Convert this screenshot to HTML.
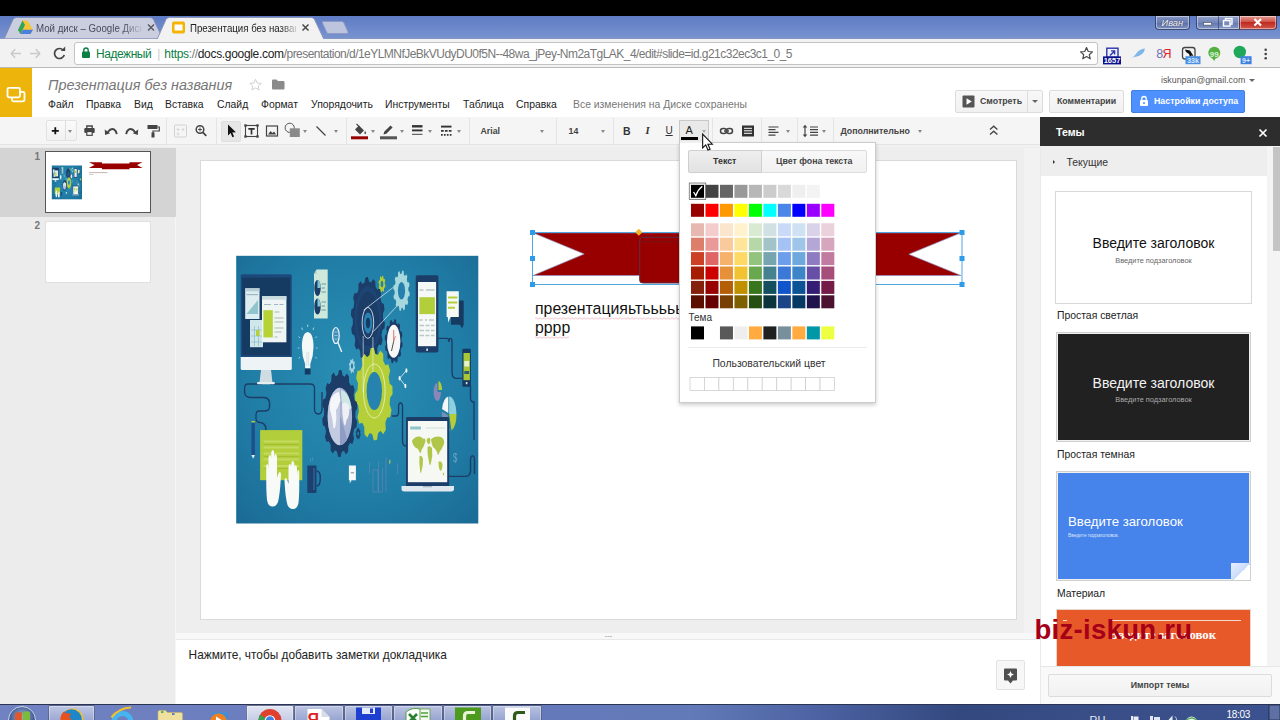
<!DOCTYPE html>
<html lang="ru">
<head>
<meta charset="utf-8">
<title>Презентация без названия</title>
<style>
*{box-sizing:border-box;margin:0;padding:0}
html,body{width:1280px;height:720px;overflow:hidden;background:#fff;font-family:"Liberation Sans",sans-serif;font-size:12px;color:#222}
.abs{position:absolute}
#blackbar{left:0;top:0;width:1280px;height:16px;background:#000}
#titlebar{left:0;top:16px;width:1280px;height:23px;background:linear-gradient(#5f7cc4,#6e8acb 60%,#7b94cf)}
#chrometb{left:0;top:39px;width:1280px;height:29px;background:#f2f2f2;border-bottom:1px solid #b9b9b9}
#omni{left:74px;top:42px;width:1024px;height:23px;background:#fff;border:1px solid #c4c4c4;border-radius:3px}
#dochead{left:0;top:68px;width:1280px;height:49px;background:#fff}
#logo{left:0;top:68px;width:32px;height:49px;background:#edb40b}
#toolbar{left:0;top:117px;width:1040px;height:31px;background:#f5f5f5;border-bottom:3px solid #f1f1f1;box-shadow:inset 0 -1px 0 #e4e4e4}
#film{left:0;top:147px;width:176px;height:557px;background:#ececec;border-right:1px solid #f6f6f6}
#main{left:176px;top:147px;width:864px;height:486px;background:#eee}
#slide{left:201px;top:161px;width:815px;height:458px;background:#fff;box-shadow:0 0 0 1px #dadada}
#notes{left:176px;top:632.500px;width:864px;height:71.500px;background:#fff;border-top:6.500px solid #f8f8f8;box-shadow:inset 0 1px 0 #e9e9e9}
#side{left:1040px;top:117px;width:240px;height:587px;background:#fff;border-left:1px solid #e9e9e9}
#taskbar{left:0;top:704px;width:1280px;height:16px;background:linear-gradient(90deg,#7182c2 0,#6579ba 42%,#627ab8 54%,#4c62a2 64%,#33487e 75%,#394e87 85%,#3c5290 100%);border-top:1px solid #2b3553;overflow:hidden}
.tbb{position:absolute;top:705px;height:16px;border:1px solid rgba(30,40,80,.55);border-bottom:none;border-radius:2px 2px 0 0;background:linear-gradient(rgba(255,255,255,.55),rgba(255,255,255,.3));box-shadow:inset 0 0 0 1px rgba(255,255,255,.35)}

#titlebar svg{position:absolute;left:0;top:0}
.tabtxt{position:absolute;top:21px;font-size:11px;line-height:14px;white-space:nowrap;overflow:hidden;transform-origin:0 50%;transform:scaleX(.88)}
.wbtn{position:absolute;top:16px;height:14px;border:1px solid rgba(40,50,90,.75);border-top:none;border-radius:0 0 4px 4px;box-shadow:inset 0 0 0 1px rgba(255,255,255,.45)}
#omnitxt{left:96px;top:47px;font-size:12px;white-space:nowrap;letter-spacing:-0.1px;line-height:15px}

.menu{position:absolute;top:99px;font-size:10.4px;line-height:12px;color:#222;white-space:nowrap}
.btn{position:absolute;top:90px;height:23px;border:1px solid #dcdcdc;border-radius:2px;background:linear-gradient(#f8f8f8,#f1f1f1);font-size:8.8px;font-weight:bold;color:#444;line-height:21px;white-space:nowrap}
.tsep{position:absolute;top:118px;width:1px;height:27px;background:#e4e4e4}
.car{position:absolute;top:130px;width:0;height:0;border-left:2.5px solid transparent;border-right:2.5px solid transparent;border-top:3px solid #888}
.tbt{position:absolute;top:125px;font-size:8.8px;font-weight:bold;color:#444;line-height:12px;white-space:nowrap}

.num{position:absolute;left:30px;width:10px;text-align:right;font-size:10px;font-weight:bold;color:#777;line-height:12px}
.thlabel{position:absolute;left:1057px;font-size:10.4px;line-height:12px;color:#222;white-space:nowrap}
.theme{position:absolute;left:1056px;width:195px;border:1px solid #d8d8d8;overflow:hidden}
.theme div{position:absolute;white-space:nowrap}
</style>
</head>
<body>
<div class="abs" id="blackbar"></div>
<div class="abs" id="titlebar"></div>
<div class="abs" id="chrometb"></div>

<svg class="abs" style="left:0;top:16px" width="1280" height="23" viewBox="0 16 1280 23">
  <path d="M4 39 L13 19.5 Q14 17.5 16.5 17.5 L150 17.5 Q152.5 17.5 153.5 19.5 L163 39 Z" fill="#cbcedf" stroke="#7f8db6" stroke-width="1"/>
  <path d="M157 39.5 L166 19.5 Q167 17.5 169.5 17.5 L311 17.5 Q313.5 17.5 314.5 19.5 L324 39.5 Z" fill="#f2f2f2" stroke="#8c97b8" stroke-width="1"/>
  <rect x="0" y="38.5" width="158" height="1" fill="#8f9bbd"/>
  <rect x="323" y="38.5" width="957" height="1" fill="#8f9bbd"/>
  <path d="M322.5 21.5 L342 21.5 Q343.5 21.5 344 23 L348 32 Q348.5 33.5 347 33.5 L328.5 33.5 Q327 33.5 326.5 32 L322.5 23 Z" fill="#bcc4de" stroke="#8d9ac4" stroke-width="1"/>
  <!-- drive favicon -->
  <path d="M22.5 20.5 L27.5 20.5 L33 30 L30.5 34 L20.5 34 L18 30 Z" fill="#f5c432"/>
  <path d="M22.5 20.5 L25 25 L20.5 34 L18 30 Z" fill="#2fa463"/>
  <path d="M20.5 34 L23 29.8 L33 29.8 L30.5 34 Z" fill="#4a7fe0"/>
  <!-- slides favicon -->
  <rect x="172" y="21.5" width="13" height="12" rx="2" fill="#f4b400"/>
  <rect x="174.5" y="24.5" width="8" height="6" fill="#fff"/>
  <!-- close x -->
  <path d="M148 24.5 l6 6 m0 -6 l-6 6" stroke="#5a5a66" stroke-width="1.5" fill="none"/>
  <path d="M302.5 24.5 l6 6 m0 -6 l-6 6" stroke="#4a4a4a" stroke-width="1.5" fill="none"/>
</svg>
<div class="tabtxt" style="left:35.5px;width:120px;color:#454a5c">Мой диск – Google Диск</div>
<div class="abs" style="left:122px;top:20px;width:22px;height:16px;background:linear-gradient(90deg,rgba(203,206,223,0),#cbcedf)"></div>
<div class="tabtxt" style="left:189.5px;width:121px;color:#222">Презентация без назван</div>
<div class="abs" style="left:280px;top:20px;width:20px;height:16px;background:linear-gradient(90deg,rgba(242,242,242,0),#f2f2f2)"></div>
<!-- window buttons -->
<div class="wbtn" style="left:1155px;width:35px;background:linear-gradient(#8395c4,#6a7eb3 50%,#5a6fa8 51%,#7f93c4)"></div>
<div class="abs" style="left:1161.500px;top:17.500px;font-size:9.300px;line-height:11px;color:#f2f4fa;font-style:italic;text-shadow:0 0 2px #334">Иван</div>
<div class="wbtn" style="left:1196px;width:44px;border-radius:0 0 0 4px;background:linear-gradient(#95a4cc,#7487ba 50%,#6277ae 51%,#8497c6)"></div>
<div class="wbtn" style="left:1239px;width:38px;border-radius:0 0 4px 0;background:linear-gradient(#e29a92,#d0544a 45%,#bf2a22 50%,#d1584a)"></div>
<div class="abs" style="left:1217.5px;top:16px;width:1px;height:14px;background:rgba(40,50,90,.55)"></div>
<svg class="abs" style="left:1196px;top:16px" width="82" height="14" viewBox="0 0 82 14">
  <rect x="7.5" y="6.5" width="8" height="2.6" fill="#fff" stroke="#445" stroke-width=".6"/>
  <rect x="29.5" y="2.6" width="6.5" height="5.5" fill="none" stroke="#fff" stroke-width="1.4"/>
  <rect x="27.5" y="4.6" width="6.5" height="5.5" fill="#7a8cbd" stroke="#fff" stroke-width="1.4"/>
  <path d="M58.5 3 l6.5 6.5 m0 -6.5 l-6.5 6.5" stroke="#fff" stroke-width="2.2" fill="none"/>
</svg>
<!-- chrome toolbar -->
<svg class="abs" style="left:0;top:39px" width="74" height="29" viewBox="0 39 74 29">
  <path d="M11 53.5 h10 M11 53.5 l4.2 -4.2 M11 53.5 l4.2 4.2" stroke="#c9c9c9" stroke-width="1.5" fill="none"/>
  <path d="M40 53.5 h-10 M40 53.5 l-4.2 -4.2 M40 53.5 l-4.2 4.2" stroke="#c9c9c9" stroke-width="1.5" fill="none"/>
  <path d="M63.3 50.2 A5 5 0 1 0 64.3 55" stroke="#444" stroke-width="1.7" fill="none"/>
  <path d="M60.8 51 L65.2 51 L65.2 46.6 Z" fill="#444"/>
</svg>
<div class="abs" id="omni"></div>
<svg class="abs" style="left:80px;top:46px" width="12" height="14" viewBox="0 0 12 14">
  <rect x="2" y="5.5" width="8" height="6.5" rx="1" fill="#0b8043"/>
  <path d="M3.8 6 V4.2 a2.2 2.2 0 0 1 4.4 0 V6" fill="none" stroke="#0b8043" stroke-width="1.4"/>
</svg>
<div class="abs" id="omnitxt"><span style="color:#0b8043;letter-spacing:-.45px">Надежный</span><span style="color:#ccc;margin:0 4px 0 6px">|</span><span style="color:#0b8043;letter-spacing:-.32px">https</span><span style="color:#777;letter-spacing:-.32px">://</span><span style="color:#222;letter-spacing:-.32px">docs.google.com</span><span style="color:#777;letter-spacing:-.53px">/presentation/d/1eYLMNfJeBkVUdyDU0f5N--48wa_jPey-Nm2aTgLAK_4/edit#slide=id.g21c32ec3c1_0_5</span></div>

<svg class="abs" style="left:1076px;top:39px" width="204" height="29" viewBox="1076 39 204 29" font-family="Liberation Sans, sans-serif">
  <path d="M1086.5 47.6 l1.75 3.9 4.2 .4 -3.2 2.8 1 4.1 -3.75 -2.2 -3.75 2.2 1 -4.1 -3.2 -2.8 4.2 -.4z" fill="none" stroke="#4a4a4a" stroke-width="1.2" stroke-linejoin="round"/>
  <rect x="1106.8" y="48.2" width="11.2" height="9" fill="#eef0fb" stroke="#2a35a8" stroke-width="1.4"/>
  <path d="M1110 55.5 l4.6 -4.6 m-3.6 0 h3.6 v3.6" stroke="#2a35a8" stroke-width="1.4" fill="none"/>
  <rect x="1103" y="56.4" width="18" height="8" fill="#0a0f8c"/>
  <text x="1112" y="63.2" font-size="7.5" font-weight="bold" fill="#fff" text-anchor="middle">1657</text>
  <path d="M1131 58 q3 -1 5 -4 q3 -5 9 -5.5 q-.5 3.5 -3 5.5 q-3 2.800 -7.500 3 q-2 .5 -3.500 1z" fill="#7db6e8"/>
  <text x="1156.300" y="58.300" font-size="12.500" fill="#6c70b8">8</text>
  <text x="1162.600" y="58.300" font-size="12.500" fill="#e0222a">Я</text>
  <rect x="1182.500" y="47.500" width="12.500" height="11.500" rx="2.500" fill="#f4f4f4" stroke="#444" stroke-width="1.3"/>
  <path d="M1185 49.500 l5 1 3.500 5.500 -2 -.5 -1.500 1.500 -1 -3 -3 -2z" fill="#111"/>
  <rect x="1185.500" y="56.200" width="15" height="8" fill="#4a8fe2"/>
  <text x="1193" y="63" font-size="7" font-weight="bold" fill="#d8e8ff" text-anchor="middle">33k</text>
  <circle cx="1214.300" cy="52.800" r="6" fill="#55b043"/>
  <path d="M1212 58 l2.300 3 1.500 -3.500z" fill="#55b043"/>
  <text x="1214.300" y="56.500" font-size="8" font-weight="bold" fill="#d9f2d0" text-anchor="middle">99</text>
  <circle cx="1239.800" cy="52" r="6.200" fill="#1fa85a"/>
  <rect x="1240.600" y="56.200" width="11" height="8" fill="#3f80e0"/>
  <text x="1246" y="63" font-size="7" font-weight="bold" fill="#d8e8ff" text-anchor="middle">9+</text>
  <circle cx="1265.700" cy="49.800" r="1.300" fill="#444"/><circle cx="1265.700" cy="54" r="1.300" fill="#444"/><circle cx="1265.700" cy="58.200" r="1.300" fill="#444"/>
</svg>
<div class="abs" id="dochead"></div>
<div class="abs" id="logo"></div>

<svg class="abs" style="left:0;top:68px" width="32" height="49" viewBox="0 0 32 49">
  <rect x="12" y="23.800" width="12.500" height="9.500" rx="1.500" fill="none" stroke="#fff" stroke-width="1.800"/>
  <rect x="7.500" y="19.800" width="12.500" height="9.500" rx="1.500" fill="#edb40b" stroke="#fff" stroke-width="1.800"/>
</svg>
<div class="abs" style="left:48px;top:76px;font-size:14.4px;line-height:18px;font-style:italic;color:#777;white-space:nowrap">Презентация без названия</div>
<svg class="abs" style="left:246px;top:76px" width="46" height="18" viewBox="246 76 46 18">
  <path d="M255.500 79.300 l1.700 3.700 4 .4 -3 2.700 .9 3.900 -3.600 -2.100 -3.600 2.100 .9 -3.900 -3 -2.700 4 -.4z" fill="none" stroke="#d0d0d0" stroke-width="1" stroke-linejoin="round"/>
  <path d="M272 80.500 q0 -1 1 -1 h3.500 l1.500 1.500 h5.500 q1 0 1 1 v6.500 q0 1 -1 1 h-10.500 q-1 0 -1 -1z" fill="#8a8a8a"/>
</svg>
<div class="menu" style="left:48px">Файл</div>
<div class="menu" style="left:86px">Правка</div>
<div class="menu" style="left:134px">Вид</div>
<div class="menu" style="left:165px">Вставка</div>
<div class="menu" style="left:217px">Слайд</div>
<div class="menu" style="left:261px">Формат</div>
<div class="menu" style="left:311px">Упорядочить</div>
<div class="menu" style="left:385px">Инструменты</div>
<div class="menu" style="left:463px">Таблица</div>
<div class="menu" style="left:516px">Справка</div>
<div class="menu" style="left:573px;color:#777">Все изменения на Диске сохранены</div>
<div class="abs" style="left:1161px;top:75px;font-size:8.8px;line-height:11px;color:#555;white-space:nowrap">iskunpan@gmail.com</div>
<div class="abs" style="left:1249px;top:79px;width:0;height:0;border-left:3px solid transparent;border-right:3px solid transparent;border-top:3.500px solid #666"></div>
<div class="btn" style="left:955px;width:73px;border-radius:2px 0 0 2px;padding-left:24px">Смотреть</div>
<div class="btn" style="left:1027px;width:16px;border-radius:0 2px 2px 0"></div>
<div class="abs" style="left:1032px;top:100px;width:0;height:0;border-left:3px solid transparent;border-right:3px solid transparent;border-top:3.500px solid #666"></div>
<svg class="abs" style="left:962px;top:95px" width="13" height="13" viewBox="0 0 13 13"><rect x=".5" y=".5" width="12" height="12" rx="1" fill="#555"/><path d="M4.500 3.200 L9.800 6.500 L4.500 9.800Z" fill="#fff"/></svg>
<div class="btn" style="left:1049px;width:75px;text-align:center">Комментарии</div>
<div class="btn" style="left:1131px;width:114px;background:#4d90fe;border-color:#3f7fe6;color:#fff;padding-left:22px">Настройки доступа</div>
<svg class="abs" style="left:1139px;top:95px" width="10" height="12" viewBox="0 0 10 12"><rect x="1" y="5" width="8" height="6" rx="1" fill="#fff"/><path d="M2.800 5.500 V3.700 a2.200 2.200 0 0 1 4.400 0 V5.500" fill="none" stroke="#fff" stroke-width="1.300"/><circle cx="5" cy="8" r="1" fill="#4d90fe"/></svg>
<div class="abs" id="toolbar"></div>

<div class="abs" style="left:46px;top:120px;width:31px;height:21px;border:1px solid #e2e2e2;border-radius:2px;background:linear-gradient(#fafafa,#f1f1f1)"></div>
<div class="abs" style="left:65px;top:121px;width:1px;height:19px;background:#dcdcdc"></div>
<div class="abs" style="left:221px;top:121px;width:20px;height:21px;border:1px solid #dedede;border-radius:2px;background:#e6e6e6"></div>
<svg class="abs" style="left:40px;top:118px" width="960" height="27" viewBox="40 118 960 27" fill="none">
  <path d="M55.300 127.300 v7 M51.800 130.800 h7" stroke="#111" stroke-width="1.800"/>
  <!-- print -->
  <path d="M86.800 128 v-2 h5.400 v2" stroke="#444" stroke-width="1.300"/>
  <rect x="84.300" y="128" width="10.400" height="5" rx="1" fill="#444"/>
  <rect x="86.800" y="131.600" width="5.400" height="3.700" fill="#fff" stroke="#444" stroke-width="1.200"/>
  <!-- undo -->
  <path d="M107.800 132 Q111 127.800 114.300 129.600 Q116.400 131 116.700 134.200" stroke="#444" stroke-width="1.900"/>
  <path d="M104.700 129.600 L105.100 135 L110.200 133.200 Z" fill="#444"/>
  <!-- redo -->
  <path d="M135.100 132 Q131.900 127.800 128.600 129.600 Q126.500 131 126.200 134.200" stroke="#444" stroke-width="1.900"/>
  <path d="M138.200 129.600 L137.800 135 L132.700 133.200 Z" fill="#444"/>
  <!-- paint roller -->
  <rect x="147.500" y="125" width="10" height="4" fill="#444"/>
  <path d="M157.500 127 h1.800 v4 h-6.300 v2" stroke="#444" stroke-width="1.200"/>
  <rect x="151.500" y="132.500" width="3" height="5" fill="#444"/>
  <!-- layout disabled -->
  <rect x="174.500" y="125" width="12" height="12" rx="1" stroke="#d2d2d2" stroke-width="1"/>
  <path d="M178 128 v3 M176.500 129.500 h3 M183 128 v3 M181.500 129.500 h3 M178 132.500 v3 M176.500 134 h3" stroke="#d2d2d2" stroke-width=".8"/>
  <!-- zoom -->
  <circle cx="200" cy="129.500" r="3.800" stroke="#444" stroke-width="1.500"/>
  <path d="M202.800 132.300 l3.500 3.500" stroke="#444" stroke-width="1.800"/>
  <path d="M198 129.500 h4 M200 127.500 v4" stroke="#444" stroke-width=".9"/>
  <!-- cursor -->
  <path d="M228 124.500 v11 l2.600 -2.500 1.800 4.200 1.700 -.7 -1.800 -4.100 3.600 -.2z" fill="#111"/>
  <!-- text box -->
  <rect x="245.500" y="125.500" width="12" height="11" stroke="#444" stroke-width="1.100"/>
  <path d="M248.300 128.800 h6.400 M251.500 128.800 v5.700" stroke="#333" stroke-width="1.700"/>
  <rect x="244.300" y="124.300" width="2.400" height="2.400" fill="#444"/><rect x="256.300" y="124.300" width="2.400" height="2.400" fill="#444"/><rect x="244.300" y="135.300" width="2.400" height="2.400" fill="#444"/><rect x="256.300" y="135.300" width="2.400" height="2.400" fill="#444"/>
  <!-- image -->
  <rect x="266.500" y="126" width="11" height="10" stroke="#444" stroke-width="1.200"/>
  <path d="M268 134.500 l2.500 -3.500 2 2 1.500 -1.500 2.200 3z" fill="#444"/>
  <!-- shape -->
  <circle cx="289.700" cy="127.800" r="4.600" stroke="#555" stroke-width="1"/>
  <rect x="289.800" y="128.300" width="10" height="8.700" fill="#8a8a8a"/>
  <!-- line -->
  <path d="M316.500 126.500 l9 9" stroke="#444" stroke-width="1.300"/>
  <!-- fill bucket -->
  <path d="M355 129.500 l4 -4 5 5 -4 4z" fill="#444"/>
  <path d="M356.500 124 l3 3" stroke="#444" stroke-width="1.100"/>
  <path d="M365.200 131 q1.600 2.300 0 3.300 q-1.600 -1 0 -3.300z" fill="#444"/>
  <rect x="351" y="136.300" width="17" height="3" fill="#980000"/>
  <!-- pencil -->
  <path d="M383.500 134.500 l.7 -2.800 6.300 -6.300 2.100 2.100 -6.300 6.300z" fill="#444"/>
  <rect x="380" y="136.300" width="17" height="3" fill="#555"/>
  <!-- line weight -->
  <path d="M412 126.300 h10.500" stroke="#333" stroke-width="2.400"/><path d="M412 130.400 h10.500" stroke="#333" stroke-width="1.900"/><path d="M412 134.300 h10.500" stroke="#444" stroke-width="1"/>
  <!-- dash -->
  <path d="M441 126.600 h10.500" stroke="#333" stroke-width="1.900"/><path d="M441 130.800 h10.500" stroke="#333" stroke-width="1.800" stroke-dasharray="2.700 1.200"/><path d="M441 134.800 h10.500" stroke="#333" stroke-width="1.800" stroke-dasharray="1.700 1.230"/>
  <!-- italic, underline -->
  <!-- link -->
  <rect x="720.500" y="128.500" width="6" height="5" rx="2.500" stroke="#444" stroke-width="1.500"/>
  <rect x="726.500" y="128.500" width="6" height="5" rx="2.500" stroke="#444" stroke-width="1.500"/>
  <path d="M724 131 h5" stroke="#444" stroke-width="1.500"/>
  <!-- comment -->
  <rect x="742" y="125.500" width="12" height="11" fill="#333"/>
  <path d="M744 128.300 h8 M744 130.800 h8 M744 133.300 h8" stroke="#fff" stroke-width="1"/>
  <!-- align -->
  <path d="M768.500 127 h10 M768.500 129.700 h7 M768.500 132.400 h10 M768.500 135.100 h7" stroke="#444" stroke-width="1.200"/>
  <!-- line spacing -->
  <path d="M805 126 v10" stroke="#444" stroke-width="1.200"/><path d="M805 124.800 l-2.300 2.800 h4.600z M805 137.200 l-2.300 -2.800 h4.600z" fill="#444"/>
  <path d="M810 127 h8 M810 129.700 h8 M810 132.400 h8 M810 135.100 h8" stroke="#444" stroke-width="1.200"/>
  <!-- chevrons -->
  <path d="M990 129.500 l3.700 -3.300 3.700 3.300 M990 134.500 l3.700 -3.300 3.700 3.300" stroke="#444" stroke-width="1.300"/>
</svg>
<div class="tsep" style="left:166px"></div><div class="tsep" style="left:216px"></div><div class="tsep" style="left:346px"></div>
<div class="tsep" style="left:469px"></div><div class="tsep" style="left:556px"></div><div class="tsep" style="left:613px"></div>
<div class="tsep" style="left:712px"></div><div class="tsep" style="left:761px"></div><div class="tsep" style="left:797px"></div><div class="tsep" style="left:833px"></div>
<div class="car" style="left:68px"></div><div class="car" style="left:303px"></div><div class="car" style="left:334px"></div>
<div class="car" style="left:370.500px"></div><div class="car" style="left:399.500px"></div><div class="car" style="left:428px"></div><div class="car" style="left:457px"></div>
<div class="car" style="left:540px"></div><div class="car" style="left:601px"></div>
<div class="car" style="left:786px"></div><div class="car" style="left:822px"></div><div class="car" style="left:917.500px"></div>
<div class="tbt" style="left:480.500px">Arial</div>
<div class="tbt" style="left:568.500px">14</div>
<div class="tbt" style="left:623px;font-size:10.5px;color:#333">B</div>
<div class="tbt" style="left:645.500px;font-size:10.5px;font-style:italic;color:#333;font-family:'Liberation Serif',serif">I</div>
<div class="tbt" style="left:665.500px;font-size:10px;text-decoration:underline;color:#333;font-weight:normal">U</div>
<div class="tbt" style="left:840.500px">Дополнительно</div>
<!-- text color button (open) -->
<div class="abs" style="left:679px;top:120px;width:30px;height:24px;border:1px solid #c8c8c8;border-bottom:none;background:#e9e9e9"></div>
<div class="abs" style="left:685.500px;top:124px;font-size:11px;line-height:12px;color:#222">A</div>
<div class="abs" style="left:681px;top:137px;width:17px;height:2.500px;background:#000"></div>
<div class="car" style="left:701.500px;border-top-color:#aaa"></div>

<div class="abs" id="film"></div>

<div class="abs" style="left:0;top:148px;width:176px;height:68.500px;background:#d4d4d4"></div>
<div class="num" style="top:150.500px">1</div>
<div class="num" style="top:220px">2</div>
<div class="abs" style="left:45px;top:151px;width:106px;height:62px;background:#fff;border:1px solid #555"></div>
<div class="abs" style="left:45px;top:221px;width:106px;height:62px;background:#fff;border:1px solid #e0e0e0"></div>
<svg class="abs" style="left:46px;top:152px" width="104" height="60" viewBox="46 152 104 60">
  <use href="#picg" transform="translate(51.800 165.500) scale(0.12474 0.12626) translate(-236.200 -255.800)"/>
  <path d="M88.900 162.200 H101.900 V163.600 H129.500 V162.200 H142.500 L137 165.100 L142.500 168 H129.500 V169.300 H101.900 V168 H88.900 L94.500 165.100 Z" fill="#980000"/>
  <rect x="89" y="172.300" width="18.500" height=".8" fill="#b9a0a0"/>
  <rect x="89" y="174.300" width="4.500" height=".7" fill="#c9b8b8"/>
</svg>
<div class="abs" id="main"></div>
<div class="abs" style="left:1024px;top:148px;width:16px;height:484.500px;background:#f2f2f2"></div>
<div class="abs" id="slide"></div>

<!-- slide content -->
<svg class="abs" style="left:525px;top:225px" width="445" height="66" viewBox="525 225 445 66">
  <path d="M533 232.800 H961 L908.800 254.300 L961 275.500 H533 L584.200 254 Z" fill="#980000" stroke="#8f8fc0" stroke-width=".7"/>
  <path d="M639.700 240 Q639.700 237.300 643 237.300 H852 Q855.300 237.300 855.300 240 V280.500 Q855.300 283 852 283 H643 Q639.700 283 639.700 280.500 Z" fill="#980000" stroke="#5a3048" stroke-width="1"/>
  <path d="M639.700 240 Q640 241.800 643 241.800 H852 Q855 241.800 855.300 240" fill="none" stroke="#6d1a2a" stroke-width=".7"/>
  <rect x="532.500" y="232.500" width="429.500" height="52" fill="none" stroke="#4fa7e0" stroke-width="1"/>
  <g fill="#2d9be8">
    <rect x="530" y="230" width="5" height="5"/><rect x="530" y="256" width="5" height="5"/><rect x="530" y="282" width="5" height="5"/>
    <rect x="959.500" y="230" width="5" height="5"/><rect x="959.500" y="256" width="5" height="5"/><rect x="959.500" y="282" width="5" height="5"/>
    <rect x="744.500" y="230" width="5" height="5"/><rect x="744.500" y="282" width="5" height="5"/>
  </g>
  <path d="M638.800 228.800 l3.500 3.500 -3.500 3.500 -3.500 -3.500z" fill="#f0b429"/>
</svg>
<div class="abs" style="left:535px;top:299.200px;font-size:15.850px;line-height:19.200px;color:#111;white-space:nowrap">презентацияьтььььь<br>рррр</div>
<svg class="abs" style="left:535px;top:316px" width="150" height="24" viewBox="0 0 150 24">
  <path d="M0 2.500 q1 -1.500 2 0 t2 0 t2 0 t2 0 t2 0 t2 0 t2 0 t2 0 t2 0 t2 0 t2 0 t2 0 t2 0 t2 0 t2 0 t2 0 t2 0 t2 0 t2 0 t2 0 t2 0 t2 0 t2 0 t2 0 t2 0 t2 0 t2 0 t2 0 t2 0 t2 0 t2 0 t2 0 t2 0 t2 0 t2 0 t2 0 t2 0 t2 0 t2 0 t2 0 t2 0 t2 0 t2 0 t2 0 t2 0 t2 0 t2 0 t2 0 t2 0 t2 0 t2 0 t2 0 t2 0 t2 0 t2 0 t2 0 t2 0 t2 0 t2 0 t2 0 t2 0 t2 0 t2 0 t2 0 t2 0 t2 0 t2 0 t2 0 t2 0 t2 0 t2 0 t2 0 t2 0 t2 0" fill="none" stroke="#ec9aa8" stroke-width=".6"/>
  <path d="M0 21.600 q1 -1.500 2 0 t2 0 t2 0 t2 0 t2 0 t2 0 t2 0 t2 0 t2 0 t2 0 t2 0 t2 0 t2 0 t2 0 t2 0 t2 0 t2 0" fill="none" stroke="#ec9aa8" stroke-width=".6"/>
</svg>
<!--IMG0--><svg class="abs" style="left:236px;top:255px" width="243" height="269" viewBox="236 255 243 269">
<defs><radialGradient id="ibg" cx=".5" cy=".45" r=".75"><stop offset="0" stop-color="#2a8fb5"/><stop offset=".6" stop-color="#207da6"/><stop offset="1" stop-color="#1a6a94"/></radialGradient><filter id="ibl" x="-2%" y="-2%" width="104%" height="104%"><feGaussianBlur stdDeviation="0.45"/></filter><clipPath id="icl"><rect x="236.200" y="255.800" width="242.100" height="267.700"/></clipPath></defs>
<g id="picg"><rect x="236.200" y="255.800" width="242.100" height="267.700" fill="url(#ibg)"/>
<g clip-path="url(#icl)"><g filter="url(#ibl)">
<g fill="none" stroke="#1b3c68" stroke-width="1.350">
<path d="M262 384 H248 Q244.600 384 244.600 388 V392 Q244.600 397 250 397.500 H264 Q269.500 398 269.500 403 V407 Q269.500 411 264 411 H259 Q256 411 256 415 V419 Q256 422 260 422.500 Q266 423 266 430"/>
<path d="M270 384 H310 Q314.500 384 314.500 388 V409 Q314.500 414 318.300 414 Q322 414 322 409 V392"/>
<path d="M391.800 416 H396 Q398.600 416 398.600 412 V407 Q398.600 403 400.500 403 Q402.500 403 402.500 407 V440 Q402.500 446 406 446"/>
<path d="M438.400 338.400 H447 Q449 338.400 449 342 Q449 338.400 450.500 338.400 Q452 338.400 452 342 V372 Q452 378.300 456 378.300 H462"/>
<path d="M449 476.300 H466 Q470.500 476.300 470.500 470 V460 Q470.500 456 472.500 456 Q474.500 456 474.500 460 V474"/>
<path d="M470.500 386 V398 Q470.500 402 474 402 V440"/>
</g>
<rect x="240.700" y="274.300" width="51.100" height="83" rx="1.500" fill="#1f4a7c"/>
<rect x="242.300" y="277.500" width="47.900" height="78" fill="#173a62"/>
<path d="M240.700 356.900 H291.800 V368.500 Q291.800 370.100 290.300 370.100 H242.200 Q240.700 370.100 240.700 368.500Z" fill="#eef3f5"/>
<path d="M261 370.100 H271 L272.500 382.500 H259.500Z" fill="#cfdde2"/><rect x="257" y="382" width="17.800" height="2.300" rx="1" fill="#e6eef0"/>
<rect x="245.200" y="288.300" width="14.300" height="30.700" fill="#dcecef"/><rect x="245.200" y="288.300" width="14.300" height="3" fill="#b5cdd6"/><path d="M246.500 314 L258 300 V314Z" fill="#8fc4cc"/><rect x="246.500" y="294" width="11.500" height="1.200" fill="#9fb8c4"/>
<rect x="250" y="320" width="13" height="27.200" fill="#cfe6ea"/><path d="M251 330 h11 M251 336 h11 M251 342 h11 M254.500 326 v20 M258.500 326 v20" stroke="#8fc0cc" stroke-width=".8"/><rect x="256" y="330" width="3.500" height="6" fill="#b5cf38"/>
<rect x="262" y="296.200" width="24.400" height="46.100" fill="#eef5f4"/><rect x="262" y="296.200" width="24.400" height="3.500" fill="#c9dde0"/><rect x="263.400" y="310.200" width="9.400" height="27.200" fill="#b5d334"/>
<path d="M274.500 312 h5 M274.500 318 h9 M274.500 322 h9 M274.500 328 h9 M274.500 332 h7 M274.500 337 h3" stroke="#a8c0a8" stroke-width="1.200"/><path d="M264 304.500 h7 M274 304.500 h4 M279.500 304.500 h4" stroke="#9fb8c0" stroke-width="1"/>
<path d="M316.500 269.400 H327.700 V318.400 H314 V274Z" fill="#cfe8dc"/><path d="M314 274 L316.500 269.400 V274Z" fill="#a8d0c4"/>
<ellipse cx="317.5" cy="288" rx="3.2" ry="8.0" fill="#1b3c68" />
<ellipse cx="317.5" cy="306.5" rx="3.2" ry="8.0" fill="#1b3c68" />
<path d="M317.500 288 V280 A3.200 8 0 0 1 320.700 288Z" fill="#7fc4d0"/><path d="M317.500 306.500 V298.500 A3.200 8 0 0 1 320.700 306.500Z" fill="#7fc4d0"/>
<path d="M321.500 284 h4.500 M321.500 288 h3.500 M321.500 292 h4.500 M321.500 302 h4.500 M321.500 306 h3.500 M321.500 310 h4.500" stroke="#6f9a98" stroke-width="1.100"/>
<path d="M383.0 319.0 L384.9 322.4 L384.5 328.3 L382.3 330.2 L381.5 335.2 L382.6 340.2 L381.2 345.2 L378.9 344.6 L377.3 348.2 L377.4 353.8 L375.3 356.8 L373.3 353.9 L371.3 355.4 L370.3 360.6 L367.9 361.0 L366.7 356.3 L364.5 355.4 L362.8 359.1 L360.5 356.8 L360.3 351.3 L358.5 348.2 L356.3 349.6 L354.6 345.2 L355.3 339.9 L354.3 335.2 L352.0 334.1 L351.3 328.3 L352.9 324.3 L352.8 319.0 L350.9 315.6 L351.3 309.7 L353.5 307.8 L354.3 302.8 L353.2 297.8 L354.6 292.8 L356.9 293.4 L358.5 289.8 L358.4 284.2 L360.5 281.2 L362.5 284.1 L364.5 282.6 L365.5 277.4 L367.9 277.0 L369.1 281.7 L371.3 282.6 L373.0 278.9 L375.3 281.2 L375.5 286.7 L377.3 289.8 L379.5 288.4 L381.2 292.8 L380.5 298.1 L381.5 302.8 L383.8 303.9 L384.5 309.7 L382.9 313.7Z" fill="#1b3c68"/>
<ellipse cx="367.9" cy="319" rx="13.4" ry="33.0" fill="#1d4474" />
<ellipse cx="367.9" cy="319" rx="10.9" ry="27.0" fill="#1b3c68" />
<path d="M363.600 310.200 L393.700 287 M373.300 331.600 L396.600 306.400" stroke="#e8f2f6" stroke-width=".7" fill="none"/>
<path d="M408.4 290.8 L409.7 292.7 L409.5 296.1 L408.0 296.8 L407.5 299.4 L408.2 302.6 L407.3 305.2 L405.9 304.0 L405.0 305.6 L404.9 309.3 L403.6 310.5 L402.7 307.7 L401.5 307.9 L400.7 311.1 L399.4 310.5 L399.1 306.9 L398.0 305.6 L396.7 307.4 L395.7 305.2 L396.2 301.7 L395.5 299.4 L394.0 299.3 L393.5 296.1 L394.7 293.7 L394.6 290.8 L393.3 288.9 L393.5 285.5 L395.0 284.8 L395.5 282.2 L394.8 279.0 L395.7 276.4 L397.1 277.6 L398.0 276.0 L398.1 272.3 L399.4 271.1 L400.3 273.9 L401.5 273.7 L402.3 270.5 L403.6 271.1 L403.9 274.7 L405.0 276.0 L406.3 274.2 L407.3 276.4 L406.8 279.9 L407.5 282.2 L409.0 282.3 L409.5 285.5 L408.3 287.9Z" fill="#a6d8de"/><ellipse cx="401.5" cy="290.8" rx="3.6" ry="8.8" fill="#2580ad"/>
<path d="M384.8 284.0 L385.4 285.2 L385.2 287.3 L384.4 287.5 L383.9 288.8 L384.1 290.8 L383.3 291.9 L382.7 290.6 L382.0 290.8 L381.5 292.4 L380.7 291.9 L380.6 289.9 L380.1 288.8 L379.2 289.1 L378.8 287.3 L379.3 285.7 L379.2 284.0 L378.6 282.8 L378.8 280.7 L379.6 280.5 L380.1 279.2 L379.9 277.2 L380.7 276.1 L381.3 277.4 L382.0 277.2 L382.5 275.6 L383.3 276.1 L383.4 278.1 L383.9 279.2 L384.8 278.9 L385.2 280.7 L384.7 282.3Z" fill="#b5cc34"/><ellipse cx="382" cy="284" rx="1.3" ry="3.2" fill="#2380ac"/>
<ellipse cx="367.900" cy="322.900" rx="5.800" ry="15.500" fill="none" stroke="#eef4f8" stroke-width=".8"/>
<ellipse cx="368" cy="322.9" rx="4.3" ry="10.5" fill="#2c82b2" />
<ellipse cx="368" cy="322.9" rx="2.2" ry="5.5" fill="#173a62" />
<path d="M401.6 341.3 L402.7 343.4 L402.4 347.1 L401.1 348.1 L400.5 351.0 L401.1 354.2 L400.1 357.1 L398.7 356.2 L397.6 358.1 L397.5 361.6 L396.0 362.8 L395.0 360.4 L393.7 360.7 L392.9 363.5 L391.4 362.8 L391.0 359.5 L389.8 358.1 L388.5 359.5 L387.3 357.1 L387.6 353.7 L386.9 351.0 L385.5 350.6 L385.0 347.1 L386.0 344.5 L385.8 341.3 L384.7 339.2 L385.0 335.5 L386.3 334.5 L386.9 331.6 L386.3 328.4 L387.3 325.5 L388.7 326.4 L389.8 324.5 L389.9 321.0 L391.4 319.8 L392.4 322.2 L393.7 321.9 L394.5 319.1 L396.0 319.8 L396.4 323.1 L397.6 324.5 L398.9 323.1 L400.1 325.5 L399.8 328.9 L400.5 331.6 L401.9 332.0 L402.4 335.5 L401.4 338.1Z" fill="#1b3c68"/>
<ellipse cx="393.7" cy="341.3" rx="6.7" ry="16.5" fill="#f6f8f8" />
<path d="M393.700 341.300 V330" stroke="#d04040" stroke-width=".7"/><path d="M393.700 341.300 L391.500 351" stroke="#222" stroke-width=".8"/><path d="M393.700 341.300 L395.500 336" stroke="#d04040" stroke-width=".6"/>
<path d="M389.6 404.4 L391.5 410.1 L390.1 417.2 L387.2 417.4 L385.4 422.6 L385.8 429.8 L383.2 434.2 L380.6 430.8 L378.1 433.1 L377.0 439.8 L373.8 440.5 L372.3 434.3 L369.6 433.1 L367.3 437.6 L364.4 434.3 L364.3 427.0 L362.2 422.7 L359.3 423.7 L357.5 417.3 L358.9 410.9 L358.0 404.5 L355.2 401.8 L355.0 394.1 L357.5 390.3 L358.0 383.6 L356.1 377.9 L357.5 370.8 L360.4 370.6 L362.2 365.4 L361.8 358.2 L364.4 353.8 L367.0 357.2 L369.5 354.9 L370.6 348.2 L373.8 347.5 L375.3 353.7 L378.0 354.9 L380.3 350.4 L383.2 353.7 L383.3 361.0 L385.4 365.3 L388.3 364.3 L390.1 370.7 L388.7 377.1 L389.6 383.5 L392.4 386.2 L392.6 393.9 L390.1 397.7Z" fill="#b5cf38"/>
<ellipse cx="374.3" cy="391" rx="7.7" ry="19.0" fill="#2683b0" />
<ellipse cx="374.300" cy="391" rx="10.800" ry="27" fill="none" stroke="#f4f8e0" stroke-width=".7"/>
<path d="M363.200 336 V392 M372.900 337 V372" stroke="#eef4f0" stroke-width=".6" fill="none"/>
<path d="M354.4 366.0 L355.0 367.1 L354.8 368.9 L354.1 369.1 L353.7 370.2 L353.8 372.0 L353.2 372.9 L352.6 371.8 L352.0 372.0 L351.6 373.4 L350.8 372.9 L350.8 371.2 L350.3 370.2 L349.6 370.5 L349.2 368.9 L349.6 367.5 L349.6 366.0 L349.0 364.9 L349.2 363.1 L349.9 362.9 L350.3 361.8 L350.2 360.0 L350.8 359.1 L351.4 360.2 L352.0 360.0 L352.4 358.6 L353.2 359.1 L353.2 360.8 L353.7 361.8 L354.4 361.5 L354.8 363.1 L354.4 364.5Z" fill="#9fd0dc"/><ellipse cx="352" cy="366" rx="1.1" ry="2.8" fill="#2380ac"/>
<path d="M360.1 433.6 L360.6 434.4 L360.4 435.9 L359.9 436.0 L359.6 437.0 L359.7 438.4 L359.1 439.1 L358.7 438.2 L358.2 438.4 L357.9 439.5 L357.3 439.1 L357.2 437.7 L356.8 437.0 L356.3 437.2 L356.0 435.9 L356.3 434.8 L356.3 433.6 L355.8 432.8 L356.0 431.3 L356.5 431.2 L356.8 430.2 L356.7 428.8 L357.3 428.1 L357.7 429.0 L358.2 428.8 L358.5 427.7 L359.1 428.1 L359.2 429.5 L359.6 430.2 L360.1 430.0 L360.4 431.3 L360.1 432.4Z" fill="#1b3c68"/><ellipse cx="358.2" cy="433.6" rx="0.9" ry="2.2" fill="#2380ac"/>
<path d="M355.4 417.4 L357.1 421.3 L356.5 427.4 L354.2 428.8 L353.2 433.7 L354.0 439.1 L352.4 443.9 L350.1 442.7 L348.3 446.0 L348.1 451.8 L345.8 454.4 L344.0 450.8 L341.7 451.9 L340.6 457.0 L338.0 456.8 L337.0 451.6 L334.8 450.2 L332.9 453.5 L330.6 450.6 L330.6 444.8 L328.8 441.2 L326.5 442.1 L325.0 437.1 L326.0 431.8 L325.1 426.7 L322.8 425.0 L322.3 418.9 L324.1 415.2 L324.2 409.6 L322.5 405.7 L323.1 399.6 L325.4 398.2 L326.4 393.3 L325.6 387.9 L327.2 383.1 L329.5 384.3 L331.3 381.0 L331.5 375.2 L333.8 372.6 L335.6 376.2 L337.9 375.1 L339.0 370.0 L341.6 370.2 L342.6 375.4 L344.8 376.8 L346.7 373.5 L349.0 376.4 L349.0 382.2 L350.8 385.8 L353.1 384.9 L354.6 389.9 L353.6 395.2 L354.5 400.3 L356.8 402.0 L357.3 408.1 L355.5 411.8Z" fill="#1b3c68"/>
<ellipse cx="339.900" cy="416.500" rx="12.200" ry="28.700" fill="#a9b4d2"/>
<path d="M339.900 387.800 A12.200 28.700 0 0 0 339.900 445.200Z" fill="#c3cbe0"/>
<path d="M341 390 Q349 392 351.500 408 Q348 412 344 410 Q341 402 341 390Z" fill="#cfe8e6"/>
<path d="M331 398 Q335 392 339 392 L340.500 400 Q338 408 336 410 Q337 418 335.500 426 Q333.500 432 333 424 Q331.500 414 330 410 Q329 404 331 398Z" fill="#f4f6fa"/>
<path d="M342 404 Q346 400 349 406 Q350 416 346.500 420 Q345 430 343.500 422 Q342 414 342 404Z" fill="#eef0f6"/>
<path d="M340 416 Q345 430 347 440 Q343 445 340 445Z" fill="#8e9cc6"/>
<rect x="415.700" y="275.300" width="22.700" height="77.300" rx="1.800" fill="#1b3c68"/>
<rect x="418" y="282" width="18.100" height="64.200" fill="#f4f8f6"/><rect x="419.400" y="297.200" width="15.500" height="16.900" fill="#b2ce3a"/>
<path d="M419.500 290 h4 M426 290 h8.500" stroke="#9fb0a8" stroke-width="1.200"/><path d="M419.500 320 h3 M425 320 h2 M429 320 h5 M419.500 325.500 h4.500 M425.500 325.500 h4 M431 325.500 h3.500 M419.500 330.500 h4.500 M425.500 330.500 h4 M431 330.500 h3.500 M419.500 335.500 h4.500 M425.500 335.500 h4 M431 335.500 h3.500" stroke="#b8c8c4" stroke-width="1.300"/>
<rect x="426.300" y="348.500" width="1.600" height="2.400" fill="#dfe8f0"/>
<path d="M451 300.500 H463.700 V324.800 L462 328.500 L460 324.800 H451Z" fill="#173a62"/>
<path d="M446.600 291.200 H458.800 V317 H450.500 L448.200 322.500 L447.800 317 H446.600Z" fill="#f6f8f4"/><path d="M448 297.600 h9.300 M448 302.600 h9.300 M448 307.800 h7" stroke="#b2ce3a" stroke-width="2"/>
<rect x="462.300" y="348.700" width="8.600" height="38" rx="1.300" fill="#173a62"/><rect x="463.500" y="353" width="6.400" height="27.200" fill="#a8c838"/><rect x="464.300" y="361" width="4.800" height="5.500" fill="#e8f0d8"/><rect x="464.300" y="371" width="4.800" height="3" fill="#2d5a7a"/><rect x="465.800" y="382" width="1.600" height="2.200" fill="#dfe8f0"/>
<path d="M307.700 332 Q313.500 333 313.500 347 Q313.500 356 310.300 364 V368.500 H305.100 V364 Q301.900 356 301.900 347 Q301.900 333 307.700 332Z" fill="#f4f8f6"/><rect x="304.800" y="368.500" width="5.800" height="6" fill="#173a62"/><path d="M306.800 352 V366 M308.600 352 V366" stroke="#c8d4d8" stroke-width=".6"/>
<path d="M307.700 327 v-2.500 M302.500 330 l-.8 -2.500 M313 330 l.8 -2.500 M300 338 l-1.300 -1.500 M315.400 338 l1.300 -1.500 M299.300 348 h-1.500 M316 348 h1.500 M300 357 l-1.300 1.500 M315.400 357 l1.300 1.500" stroke="#bfe4ec" stroke-width=".8"/>
<ellipse cx="335.900" cy="335.500" rx="3.300" ry="8" fill="#3a8fb8" stroke="#f0f6f8" stroke-width="1.200"/><path d="M337.800 342 L341.700 352" stroke="#f0f6f8" stroke-width="1.300"/><path d="M334.500 332 h3 M334.300 335.500 h3.300 M334.500 339 h3" stroke="#cfe4ec" stroke-width=".6"/>
<path d="M406.400 370.500 L399.600 378.300 L405.400 386" stroke="#eef4f8" stroke-width=".8" fill="none"/><ellipse cx="406.400" cy="370.500" rx="1" ry="2.200" fill="#f4f8f8"/><ellipse cx="399.600" cy="378.300" rx="1" ry="2.200" fill="#f4f8f8"/><ellipse cx="405.400" cy="386" rx="1" ry="2.200" fill="#f4f8f8"/>
<path d="M437.500 383 A3.700 9 0 1 0 441 392 H437.500Z" fill="#8a86b8"/><path d="M438.500 381 V390 H442 A3.500 9 0 0 0 438.500 381Z" fill="#b5cc34"/>
<path d="M449.100 414.100 V396.600 A7.400 17.500 0 0 1 456.500 414.100Z" fill="#8fd0e0"/><path d="M449.100 414.100 H456.500 A7.400 17.500 0 0 1 451.500 430.600Z" fill="#b5cc34"/><path d="M448.300 413 V396.600 A7.400 17.500 0 0 0 442 409Z" fill="#f4f8f8"/><path d="M447.800 415 L441.800 411.500 A7.400 17.500 0 0 0 449.500 431.600Z" fill="#8a92bc" opacity=".8"/>
<text x="453" y="462" font-size="13" fill="#6fa4c8" font-family="Liberation Sans, sans-serif" transform="translate(453 0) scale(.6 1) translate(-453 0)">$</text>
<path d="M369.500 462 V473 M373 470 H378 V492 H373Z M378.500 461 V492 H382.500 V468 M386 457 V492 M397.500 463 V474" stroke="#7a86c0" stroke-width=".6" fill="none" opacity=".8"/><path d="M389.800 459.500 v4.500 M388.900 461.800 h1.800" stroke="#c8d44a" stroke-width=".7"/>
<rect x="251.400" y="421" width="3.500" height="34" fill="#1f4f8c"/><rect x="251.400" y="421" width="3.500" height="1.500" fill="#b5cf38"/><path d="M251.400 455 h3.500 l-1.750 3.800z" fill="#e8eef4"/>
<rect x="260.100" y="430.100" width="42.200" height="50.100" fill="#b2cf3a"/><path d="M263.500 441.500 H299 M263.500 447.500 H299 M263.500 453.500 H299 M263.500 459.500 H299 M263.500 466 H299" stroke="#c8dc6a" stroke-width="1.800" opacity=".8"/><path d="M263.500 444.500 H299 M263.500 456.500 H299 M263.500 468.500 H299" stroke="#9fbc30" stroke-width=".8"/>
<path d="M266.300 470 Q266 464 267.300 464 Q268.300 464 268.500 470 V458 Q268.800 455 270 455 Q271 455 271.200 458 V453 Q271.500 450 272.800 450 Q274 450 274.200 453 V457 Q274.500 454 275.600 454 Q276.800 454 277 457 V478 Q278.500 472 279.800 472 Q281.500 472.500 280.800 478 Q280 494 278 502 Q276 507 272 506.500 Q268 506 267 500 Q266 490 266.300 470Z" fill="#f8faf8"/>
<path d="M299.200 476 Q299.500 470 298.200 470 Q297.200 470 297 476 V468 Q296.700 465 295.500 465 Q294.500 465 294.300 468 V464 Q294 461 292.700 461 Q291.500 461 291.300 464 V467 Q291 464 289.900 464 Q288.700 464 288.500 467 V484 Q287 478 285.700 478 Q284 478.500 284.700 484 Q285.500 498 287.500 505 Q289.500 509.500 293.500 509 Q297.500 508.500 298.500 503 Q299.500 494 299.200 476Z" fill="#f8faf8"/>
<rect x="307.300" y="465.600" width="9.200" height="27.300" rx="1" fill="#1c4170"/><path d="M316.500 471 Q320.300 471 320.300 478 Q320.300 486 316.500 486" fill="none" stroke="#1c4170" stroke-width="1.600"/><rect x="313" y="468" width="2" height="22" fill="#2a5a8c"/><path d="M310.500 462 v-4 M312.500 461 v-4" stroke="#4a9ac0" stroke-width=".6"/>
<path d="M348.900 465.600 H355.900 V480.200 H351.500 L349.800 483.500 L349.800 480.200 H348.900Z" fill="#f6f8f8"/><path d="M350.800 472.800 h3.200" stroke="#7a8a98" stroke-width="1"/>
<rect x="406" y="417" width="43.100" height="69.500" rx="1.200" fill="#1b3c68"/><rect x="407.900" y="421" width="39.300" height="61.200" fill="#f6f8f4"/>
<path d="M401.500 486 H454 V489 Q454 491.500 451 491.500 H404.500 Q401.500 491.500 401.500 489Z" fill="#dfe8ee"/><rect x="423" y="486" width="9" height="1.300" fill="#aab8c4"/>
<rect x="410.200" y="426.500" width="10.700" height="3" fill="#8fc4c8"/><path d="M426 428 h19" stroke="#c8d8d8" stroke-width=".8"/>
<g fill="#b0c648"><path d="M412 441 Q414 437 418 436.500 Q422 436 423 439 Q425 437 425.500 441 Q424 447 421.500 450 Q421 455 419.500 452 Q418 448 416 448 Q413 446 412 441Z"/><path d="M419.500 456 Q422 455 423 459 Q423 466 421.500 471 Q420.500 476 420 470 Q419 462 419.500 456Z"/><path d="M426.500 440 Q428 437 430 438 Q431 441 429.500 444 Q427.500 445 426.500 440Z"/><path d="M427.500 447 Q430 445 432 448 Q433 456 431 463 Q430 468 429 462 Q427 454 427.500 447Z"/><path d="M431 439 Q436 435.500 441 437 Q445 439 444 444 Q442 449 439.500 452 Q438 458 437 452 Q435 448 433 447 Q431 443 431 439Z"/><path d="M438.500 462 Q441 460 442.500 464 Q442.500 470 440.500 471 Q438.500 469 438.500 462Z"/><ellipse cx="443.500" cy="474" rx=".6" ry="1.500"/></g>
</g></g></g>
</svg><!--IMG1-->
<div class="abs" id="notes"></div>

<div class="abs" style="left:605px;top:635.500px;width:1.500px;height:1.500px;background:#bbb;box-shadow:2.500px 0 #bbb,5px 0 #bbb"></div>
<div class="abs" style="left:188.600px;top:648px;font-size:11.850px;line-height:14px;color:#222;white-space:nowrap">Нажмите, чтобы добавить заметки докладчика</div>
<div class="abs" style="left:996px;top:660px;width:29px;height:30px;border:1px solid #e2e2e2;border-radius:2px;background:#f7f7f7"></div>
<svg class="abs" style="left:1003px;top:668px" width="15" height="16" viewBox="0 0 15 16"><path d="M1 1.500 q0 -1 1 -1 h11 q1 0 1 1 v10 q0 1 -1 1 h-3 l-2.500 3 -2.500 -3 h-3 q-1 0 -1 -1z" fill="#505050"/><path d="M7.500 3 l1.100 2.400 2.400 1.100 -2.400 1.100 -1.100 2.400 -1.100 -2.400 -2.400 -1.100 2.400 -1.100z" fill="#fff"/></svg>
<div class="abs" id="side"></div>

<div class="abs" style="left:1040px;top:117px;width:240px;height:29px;background:#2d2d2d"></div>
<div class="abs" style="left:1056px;top:124.500px;font-size:10.600px;font-weight:bold;color:#fff;line-height:14px">Темы</div>
<svg class="abs" style="left:1258px;top:128px" width="10" height="10" viewBox="0 0 10 10"><path d="M1.500 1.500 l7 7 m0 -7 l-7 7" stroke="#fff" stroke-width="1.700"/></svg>
<div class="abs" style="left:1041px;top:146px;width:226px;height:30px;background:#eee"></div>
<div class="abs" style="left:1267px;top:146px;width:13px;height:520px;background:#f4f4f4"></div>
<div class="abs" style="left:1273px;top:147px;width:7px;height:104px;background:#c4c4c4"></div>
<div class="abs" style="left:1053px;top:160px;width:0;height:0;border-top:2px solid transparent;border-bottom:2px solid transparent;border-left:2.500px solid #333"></div>
<div class="abs" style="left:1066.500px;top:156.500px;font-size:10.400px;line-height:12px;color:#333">Текущие</div>

<div class="theme" style="left:1055px;width:197px;top:191px;height:113px;background:#fff">
  <div style="left:0;width:195px;top:43px;text-align:center;font-size:14px;line-height:16px;color:#111">Введите заголовок</div>
  <div style="left:0;width:195px;top:63.500px;text-align:center;font-size:7.400px;line-height:9px;color:#666">Введите подзаголовок</div>
</div>
<div class="thlabel" style="top:309.500px">Простая светлая</div>
<div class="theme" style="top:331.500px;height:110.500px;background:#212121;border-color:#cfcfcf;box-shadow:inset 0 0 0 1px #f0f0f0">
  <div style="left:0;width:193px;top:42.500px;text-align:center;font-size:14px;line-height:16px;color:#f3f3f3">Введите заголовок</div>
  <div style="left:0;width:193px;top:62px;text-align:center;font-size:7.400px;line-height:9px;color:#aaa">Введите подзаголовок</div>
</div>
<div class="thlabel" style="top:448.500px">Простая темная</div>
<div class="theme" style="top:470.500px;height:110.500px;background:#4683ea;border-color:#cfcfcf;box-shadow:inset 0 0 0 1px #f0f0f0">
  <div style="left:11px;top:42px;font-size:13.200px;line-height:16px;color:#fff">Введите заголовок</div>
  <div style="left:11px;top:61.500px;font-size:4.800px;line-height:6px;color:#dbe6fb">Введите подзаголовок.</div>
  <div style="left:174px;top:91px;width:20px;height:20px;background:linear-gradient(135deg,#e8effc 0,#c9dbf9 50%,#fff 50%)"></div>
</div>
<div class="thlabel" style="top:588px">Материал</div>
<div class="theme" style="top:609px;height:57px;background:#e8592a;border-color:#e9d6c8;border-bottom:none">
  <div style="left:54px;top:9.500px;width:130px;height:1px;background:#f7d9cc"></div>
  <div style="left:6px;top:9.500px;width:4px;height:1px;background:#f7d9cc"></div>
  <div style="left:52px;top:17px;font-family:'Liberation Serif',serif;font-weight:bold;font-size:12.800px;line-height:16px;color:#fff">Введите заголовок</div>
</div>
<div class="abs" style="left:1041px;top:666px;width:239px;height:38px;background:#f9f9f9;border-top:1px solid #e6e6e6"></div>
<div class="abs" style="left:1048px;top:674px;width:224px;height:23px;border:1px solid #dcdcdc;border-radius:2px;background:linear-gradient(#f8f8f8,#f1f1f1);font-size:8.800px;font-weight:bold;color:#444;line-height:21px;text-align:center">Импорт темы</div>
<div class="abs" style="left:1034.500px;top:614px;font-size:27.500px;line-height:32px;font-weight:bold;color:#a50018;letter-spacing:.3px;white-space:nowrap">biz-iskun.ru</div>

<div class="abs" style="left:679px;top:142px;width:196.500px;height:260.500px;background:#fff;border:1px solid #ccc;box-shadow:0 2px 4px rgba(0,0,0,.2)"></div>
<div class="abs" style="left:680px;top:141px;width:28px;height:2px;background:#f0f0f0"></div>
<div class="abs" style="left:688px;top:150.300px;width:179px;height:23.200px;border:1px solid #dcdcdc;border-radius:2px;background:linear-gradient(#f8f8f8,#f1f1f1)"></div>
<div class="abs" style="left:688px;top:150.300px;width:73.500px;height:23.200px;border:1px solid #cfcfcf;border-radius:2px 0 0 2px;background:linear-gradient(#efefef,#e2e2e2);font-size:8.800px;font-weight:bold;color:#333;text-align:center;line-height:20.500px">Текст</div>
<div class="abs" style="left:761.500px;top:150.500px;width:105.500px;height:22.500px;font-size:8.800px;font-weight:bold;color:#444;text-align:center;line-height:21px">Цвет фона текста</div>
<svg class="abs" style="left:680px;top:176px" width="195" height="222" viewBox="680 176 195 222">
  <g transform="translate(.6 0)">
  <rect x="690.40" y="184.8" width="13" height="13" fill="#000000"/><rect x="704.88" y="184.8" width="13" height="13" fill="#434343"/><rect x="719.36" y="184.8" width="13" height="13" fill="#666666"/><rect x="733.84" y="184.8" width="13" height="13" fill="#999999"/><rect x="748.32" y="184.8" width="13" height="13" fill="#b7b7b7"/><rect x="762.80" y="184.8" width="13" height="13" fill="#cccccc"/><rect x="777.28" y="184.8" width="13" height="13" fill="#d9d9d9"/><rect x="791.76" y="184.8" width="13" height="13" fill="#efefef"/><rect x="806.24" y="184.8" width="13" height="13" fill="#f3f3f3"/><rect x="820.72" y="184.8" width="13" height="13" fill="#ffffff"/><rect x="690.40" y="203.8" width="13" height="13" fill="#980000"/><rect x="704.88" y="203.8" width="13" height="13" fill="#ff0000"/><rect x="719.36" y="203.8" width="13" height="13" fill="#ff9900"/><rect x="733.84" y="203.8" width="13" height="13" fill="#ffff00"/><rect x="748.32" y="203.8" width="13" height="13" fill="#00ff00"/><rect x="762.80" y="203.8" width="13" height="13" fill="#00ffff"/><rect x="777.28" y="203.8" width="13" height="13" fill="#4a86e8"/><rect x="791.76" y="203.8" width="13" height="13" fill="#0000ff"/><rect x="806.24" y="203.8" width="13" height="13" fill="#9900ff"/><rect x="820.72" y="203.8" width="13" height="13" fill="#ff00ff"/><rect x="690.40" y="223.3" width="13" height="13" fill="#e6b8af"/><rect x="704.88" y="223.3" width="13" height="13" fill="#f4cccc"/><rect x="719.36" y="223.3" width="13" height="13" fill="#fce5cd"/><rect x="733.84" y="223.3" width="13" height="13" fill="#fff2cc"/><rect x="748.32" y="223.3" width="13" height="13" fill="#d9ead3"/><rect x="762.80" y="223.3" width="13" height="13" fill="#d0e0e3"/><rect x="777.28" y="223.3" width="13" height="13" fill="#c9daf8"/><rect x="791.76" y="223.3" width="13" height="13" fill="#cfe2f3"/><rect x="806.24" y="223.3" width="13" height="13" fill="#d9d2e9"/><rect x="820.72" y="223.3" width="13" height="13" fill="#ead1dc"/><rect x="690.40" y="237.7" width="13" height="13" fill="#dd7e6b"/><rect x="704.88" y="237.7" width="13" height="13" fill="#ea9999"/><rect x="719.36" y="237.7" width="13" height="13" fill="#f9cb9c"/><rect x="733.84" y="237.7" width="13" height="13" fill="#ffe599"/><rect x="748.32" y="237.7" width="13" height="13" fill="#b6d7a8"/><rect x="762.80" y="237.7" width="13" height="13" fill="#a2c4c9"/><rect x="777.28" y="237.7" width="13" height="13" fill="#a4c2f4"/><rect x="791.76" y="237.7" width="13" height="13" fill="#9fc5e8"/><rect x="806.24" y="237.7" width="13" height="13" fill="#b4a7d6"/><rect x="820.72" y="237.7" width="13" height="13" fill="#d5a6bd"/><rect x="690.40" y="252.1" width="13" height="13" fill="#cc4125"/><rect x="704.88" y="252.1" width="13" height="13" fill="#e06666"/><rect x="719.36" y="252.1" width="13" height="13" fill="#f6b26b"/><rect x="733.84" y="252.1" width="13" height="13" fill="#ffd966"/><rect x="748.32" y="252.1" width="13" height="13" fill="#93c47d"/><rect x="762.80" y="252.1" width="13" height="13" fill="#76a5af"/><rect x="777.28" y="252.1" width="13" height="13" fill="#6d9eeb"/><rect x="791.76" y="252.1" width="13" height="13" fill="#6fa8dc"/><rect x="806.24" y="252.1" width="13" height="13" fill="#8e7cc3"/><rect x="820.72" y="252.1" width="13" height="13" fill="#c27ba0"/><rect x="690.40" y="266.5" width="13" height="13" fill="#a61c00"/><rect x="704.88" y="266.5" width="13" height="13" fill="#cc0000"/><rect x="719.36" y="266.5" width="13" height="13" fill="#e69138"/><rect x="733.84" y="266.5" width="13" height="13" fill="#f1c232"/><rect x="748.32" y="266.5" width="13" height="13" fill="#6aa84f"/><rect x="762.80" y="266.5" width="13" height="13" fill="#45818e"/><rect x="777.28" y="266.5" width="13" height="13" fill="#3c78d8"/><rect x="791.76" y="266.5" width="13" height="13" fill="#3d85c6"/><rect x="806.24" y="266.5" width="13" height="13" fill="#674ea7"/><rect x="820.72" y="266.5" width="13" height="13" fill="#a64d79"/><rect x="690.40" y="280.9" width="13" height="13" fill="#85200c"/><rect x="704.88" y="280.9" width="13" height="13" fill="#990000"/><rect x="719.36" y="280.9" width="13" height="13" fill="#b45f06"/><rect x="733.84" y="280.9" width="13" height="13" fill="#bf9000"/><rect x="748.32" y="280.9" width="13" height="13" fill="#38761d"/><rect x="762.80" y="280.9" width="13" height="13" fill="#134f5c"/><rect x="777.28" y="280.9" width="13" height="13" fill="#1155cc"/><rect x="791.76" y="280.9" width="13" height="13" fill="#0b5394"/><rect x="806.24" y="280.9" width="13" height="13" fill="#351c75"/><rect x="820.72" y="280.9" width="13" height="13" fill="#741b47"/><rect x="690.40" y="295.3" width="13" height="13" fill="#5b0f00"/><rect x="704.88" y="295.3" width="13" height="13" fill="#660000"/><rect x="719.36" y="295.3" width="13" height="13" fill="#783f04"/><rect x="733.84" y="295.3" width="13" height="13" fill="#7f6000"/><rect x="748.32" y="295.3" width="13" height="13" fill="#274e13"/><rect x="762.80" y="295.3" width="13" height="13" fill="#0c343d"/><rect x="777.28" y="295.3" width="13" height="13" fill="#1c4587"/><rect x="791.76" y="295.3" width="13" height="13" fill="#073763"/><rect x="806.24" y="295.3" width="13" height="13" fill="#20124d"/><rect x="820.72" y="295.3" width="13" height="13" fill="#4c1130"/><rect x="690.40" y="326.4" width="13" height="13" fill="#000000"/><rect x="704.88" y="326.4" width="13" height="13" fill="#ffffff"/><rect x="719.36" y="326.4" width="13" height="13" fill="#595959"/><rect x="733.84" y="326.4" width="13" height="13" fill="#eeeeee"/><rect x="748.32" y="326.4" width="13" height="13" fill="#ffab40"/><rect x="762.80" y="326.4" width="13" height="13" fill="#212121"/><rect x="777.28" y="326.4" width="13" height="13" fill="#78909c"/><rect x="791.76" y="326.4" width="13" height="13" fill="#ffab40"/><rect x="806.24" y="326.4" width="13" height="13" fill="#0097a7"/><rect x="820.72" y="326.4" width="13" height="13" fill="#eeff41"/>
  <rect x="689.400" y="183.800" width="15" height="15" fill="none" stroke="#e8e8e8" stroke-width="1"/>
  <rect x="688.600" y="183" width="16.600" height="16.600" fill="none" stroke="#444" stroke-width=".6"/>
  <path d="M693 192 l2.200 3.800 q2 -6 6.500 -9.500" fill="none" stroke="#fff" stroke-width="1.300"/>
  </g>
  <rect x="688" y="347" width="179" height="1" fill="#ebebeb"/>
  <rect x="690.00" y="377.5" width="14.45" height="13" fill="#fff" stroke="#cfcfcf" stroke-width=".8"/><rect x="704.45" y="377.5" width="14.45" height="13" fill="#fff" stroke="#cfcfcf" stroke-width=".8"/><rect x="718.90" y="377.5" width="14.45" height="13" fill="#fff" stroke="#cfcfcf" stroke-width=".8"/><rect x="733.35" y="377.5" width="14.45" height="13" fill="#fff" stroke="#cfcfcf" stroke-width=".8"/><rect x="747.80" y="377.5" width="14.45" height="13" fill="#fff" stroke="#cfcfcf" stroke-width=".8"/><rect x="762.25" y="377.5" width="14.45" height="13" fill="#fff" stroke="#cfcfcf" stroke-width=".8"/><rect x="776.70" y="377.5" width="14.45" height="13" fill="#fff" stroke="#cfcfcf" stroke-width=".8"/><rect x="791.15" y="377.5" width="14.45" height="13" fill="#fff" stroke="#cfcfcf" stroke-width=".8"/><rect x="805.60" y="377.5" width="14.45" height="13" fill="#fff" stroke="#cfcfcf" stroke-width=".8"/><rect x="820.05" y="377.5" width="14.45" height="13" fill="#fff" stroke="#cfcfcf" stroke-width=".8"/>
</svg>
<div class="abs" style="left:688.500px;top:312px;font-size:10px;line-height:12px;color:#333">Тема</div>
<div class="abs" style="left:680px;top:357.500px;width:178px;text-align:center;font-size:10.400px;line-height:12px;color:#333;white-space:nowrap">Пользовательский цвет</div>
<!-- mouse cursor -->
<svg class="abs" style="left:700.800px;top:133px" width="13.200" height="19.800" viewBox="0 0 12 18"><path d="M1.500 1 V13.500 L4.300 10.800 L6.300 15.500 L8.300 14.700 L6.300 10.200 H10.300 Z" fill="#fff" stroke="#111" stroke-width="1"/></svg>

<div class="abs" id="taskbar"></div>
<div class="tbb" style="left:48px;width:47px"></div>
<div class="tbb" style="left:245.500px;width:48px;background:linear-gradient(rgba(255,255,255,.8),rgba(255,255,255,.6))"></div>
<div class="tbb" style="left:293.500px;width:50px"></div>
<div class="tbb" style="left:343.500px;width:49.500px"></div>
<div class="tbb" style="left:393px;width:49.500px"></div>
<div class="tbb" style="left:442.500px;width:49px"></div>
<div class="tbb" style="left:491.500px;width:50px"></div>
<svg class="abs" style="left:0;top:705px" width="1280" height="15" viewBox="0 705 1280 15" font-family="Liberation Sans, sans-serif">
  <defs><radialGradient id="orb" cx=".5" cy=".4" r=".6"><stop offset="0" stop-color="#9fb4d6"/><stop offset=".7" stop-color="#4a6398"/><stop offset="1" stop-color="#2a3a66"/></radialGradient></defs>
  <circle cx="22" cy="720" r="13.500" fill="url(#orb)" stroke="#c9d3ea" stroke-width="1"/>
  <path d="M15 713.500 q3.500 -2.500 6.800 -1 v8 h-6.800z" fill="#e2562c"/><path d="M22.800 712.500 q3.500 -2 7.200 -.5 v8.500 h-7.200z" fill="#7cba3b"/>
  <!-- firefox -->
  <circle cx="72.500" cy="719.500" r="11" fill="#f0c030"/><circle cx="71.500" cy="719.500" r="10.300" fill="#1f86c8"/><path d="M60.500 722 q-1 -7 4 -11 q0 2 1.500 2.500 q3 -1.500 5 1 q-2 1 -1.500 3.500 l2 1 -2.500 3z" fill="#e8501c"/>
  <!-- IE -->
  <circle cx="122.500" cy="722" r="8.500" fill="none" stroke="#45b4f0" stroke-width="5"/><path d="M114 722 h17" stroke="#45b4f0" stroke-width="3"/><path d="M111.500 717.500 q7 -9.500 19.500 -10" fill="none" stroke="#f0c030" stroke-width="2.200"/>
  <!-- folder -->
  <path d="M158 712 q0 -1.500 1.500 -1.500 h6 l2 2 h13.500 q1.500 0 1.500 1.500 v8 h-24.500z" fill="#f0e0a0" stroke="#c8b060" stroke-width=".6"/>
  <rect x="161" y="711.300" width="2.500" height="1.500" fill="#3aa040"/><rect x="172" y="713.300" width="2.500" height="1.500" fill="#3060c0"/>
  <!-- media player -->
  <rect x="212" y="712.500" width="16" height="9" fill="#3f8fd8"/><circle cx="218.500" cy="722" r="8.500" fill="#f08020"/><path d="M216 716.500 l6.500 4 -6.500 4z" fill="#fff"/>
  <!-- chrome -->
  <circle cx="270" cy="720.500" r="11.500" fill="#e04030"/><path d="M270 720.500 L260 714.800 A11.500 11.500 0 0 0 264 730.500 Z" fill="#38a050"/><path d="M270 720.500 L281.500 720.500 A11.500 11.500 0 0 1 276 730.500 Z" fill="#f0c020"/><circle cx="270" cy="720.500" r="5.300" fill="#fff"/><circle cx="270" cy="720.500" r="4.200" fill="#3f80e0"/>
  <!-- yandex -->
  <path d="M307.500 709 h14 l8 8 v4 h-22z" fill="#fff"/><path d="M321.500 709 v8 h8z" fill="#d8dce8"/><text x="307.500" y="724.500" font-size="16" font-weight="bold" fill="#e02020">Я</text>
  <!-- floppy -->
  <path d="M356 707.500 h25 v14 h-25z" fill="#1f3fd0"/><rect x="362" y="707.500" width="13" height="6.500" fill="#e8ecf8"/><rect x="370" y="708.500" width="3" height="4.500" fill="#1f3fd0"/>
  <!-- excel -->
  <rect x="412" y="709" width="18" height="13" fill="#f4f8f0" stroke="#60a040" stroke-width=".8"/><path d="M406 712 q6 -5 14 -3 v12 h-14z" fill="#fff" stroke="#50a040" stroke-width="1"/><path d="M409 714 l8 8 m0 -8 l-8 8" stroke="#2a8030" stroke-width="2.600"/>
  <path d="M421 713 h7 m-7 3.500 h7" stroke="#50a040" stroke-width="1.300"/>
  <!-- camtasia -->
  <rect x="455" y="707.500" width="26" height="14" fill="#4e9a1e"/><path d="M475 712.500 h-7 q-3.500 0 -3.500 3.500 v5" fill="none" stroke="#e8f4d8" stroke-width="3.200"/>
  <rect x="505" y="707.500" width="25" height="14" fill="#fafafa"/><path d="M525 712.500 h-7 q-3.500 0 -3.500 3.500 v5" fill="none" stroke="#2f5a1a" stroke-width="3.200"/>
  <!-- tray -->
  <text x="1089.500" y="723.500" font-size="11" fill="#e6ebf8">RU</text>
  <path d="M1131 716 h2 v5 h-2z M1133.500 716.500 h5 v4.500 h-5z" fill="#e8ecf6"/>
  <path d="M1150 716 h3 v5 h-3z M1154 717 h6 v4 h-6z" fill="#dfe5f2"/>
  <path d="M1168.500 720 l4 -4.500 v5z" fill="#e8ecf6"/><path d="M1175 716.500 q2 1.500 1.500 4" fill="none" stroke="#cfd6ea" stroke-width=".9"/>
  <circle cx="1191.500" cy="722" r="5.500" fill="#e8f4e8"/><path d="M1186.500 720 q5 -4 10 0" stroke="#58a860" stroke-width="1.500" fill="none"/>
  <text x="1226.500" y="718.300" font-size="10" fill="#fff" letter-spacing="-.3">18:03</text>
  <rect x="1269" y="705" width="11" height="15" fill="rgba(255,255,255,.18)" stroke="rgba(20,30,60,.7)" stroke-width="1"/>
</svg>

</body>
</html>
